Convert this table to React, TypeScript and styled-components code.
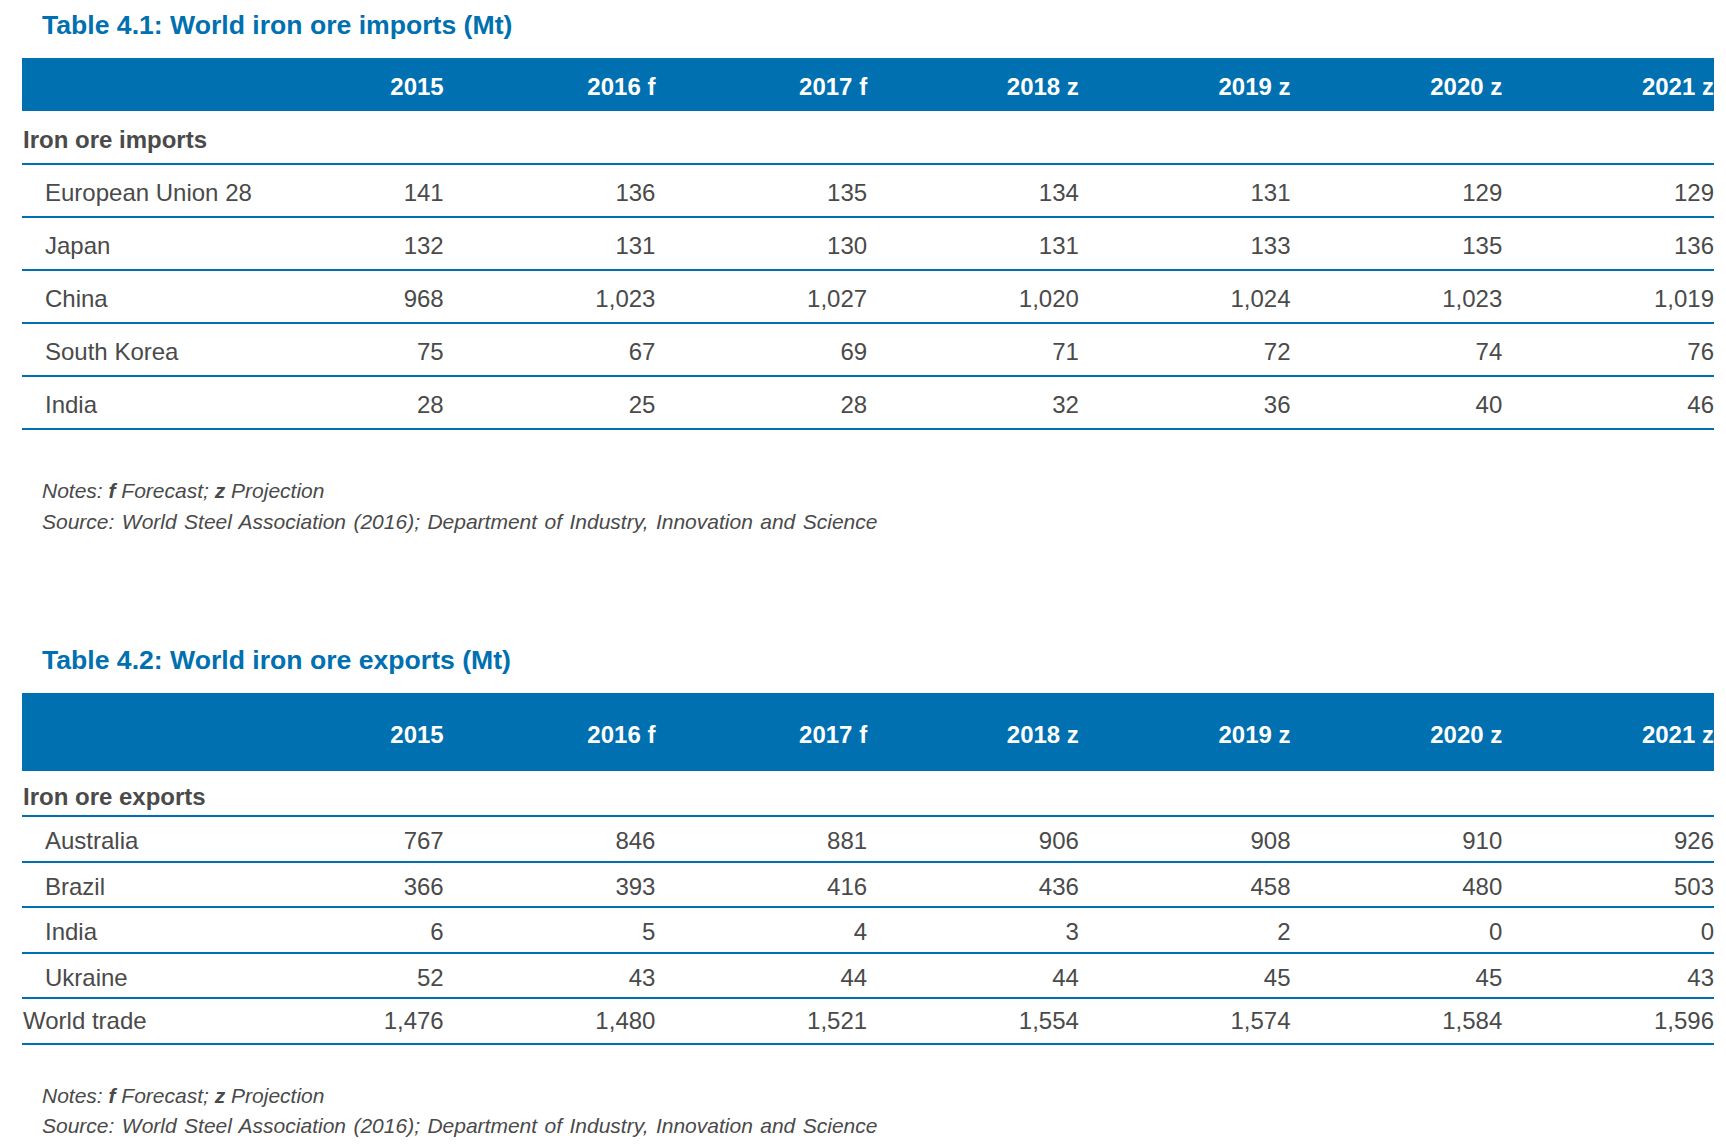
import React from 'react';
import styled, { createGlobalStyle } from 'styled-components';

const GlobalStyle = createGlobalStyle`
  html, body {
    margin: 0;
    padding: 0;
    background: #ffffff;
  }
  body {
    font-family: "Liberation Sans", Arial, Helvetica, sans-serif;
    color: #4b4b4b;
  }
`;

const BLUE = '#0070b0';
const TEXT = '#4a4a4a';

const Page = styled.div`
  padding: 8px 12px 0 22px;
  width: 1692px;
`;

const Section = styled.section<{ $gap?: number }>`
  margin-top: ${p => p.$gap ?? 0}px;
`;

const TableTitle = styled.h2`
  margin: 0 0 16px 20px;
  font-size: 26.6px;
  line-height: 34px;
  font-weight: 700;
  color: ${BLUE};
`;

const Row = styled.div`
  display: grid;
  grid-template-columns: 210px repeat(7, 1fr);
  align-items: center;
  box-sizing: border-box;
  font-size: 24px;
  line-height: 28px;
  white-space: nowrap;
`;

const HeaderRow = styled(Row)<{ $height: number; $pad: number }>`
  height: ${p => p.$height}px;
  padding-top: ${p => p.$pad}px;
  background: ${BLUE};
  color: #ffffff;
  font-weight: 700;
  overflow: hidden;
`;

const SectionRow = styled(Row)<{ $height: number; $pad: number }>`
  height: ${p => p.$height + 2}px;
  padding-top: ${p => p.$pad}px;
  border-bottom: 2px solid ${BLUE};
  color: ${TEXT};
  font-weight: 700;
`;

const DataRow = styled(Row)<{ $height: number; $pad: number }>`
  height: ${p => p.$height + 2}px;
  padding-top: ${p => p.$pad}px;
  border-bottom: 2px solid ${BLUE};
  color: ${TEXT};
`;

const Label = styled.div<{ $indent?: boolean }>`
  padding-left: ${p => (p.$indent ? 23 : 1)}px;
`;

const Num = styled.div`
  text-align: right;
`;

const Notes = styled.div<{ $gap: number }>`
  margin-top: ${p => p.$gap}px;
  margin-left: 20px;
  font-size: 21px;
  line-height: 30.5px;
  font-style: italic;
  color: ${TEXT};
`;

const NoteLine = styled.div<{ $spread?: boolean }>`
  word-spacing: ${p => (p.$spread ? 1.6 : 0)}px;
  white-space: nowrap;
`;

const years = ['2015', '2016 f', '2017 f', '2018 z', '2019 z', '2020 z', '2021 z'];

type Line = { name: string; values: string[]; total?: boolean };

const imports: Line[] = [
  { name: 'European Union 28', values: ['141', '136', '135', '134', '131', '129', '129'] },
  { name: 'Japan', values: ['132', '131', '130', '131', '133', '135', '136'] },
  { name: 'China', values: ['968', '1,023', '1,027', '1,020', '1,024', '1,023', '1,019'] },
  { name: 'South Korea', values: ['75', '67', '69', '71', '72', '74', '76'] },
  { name: 'India', values: ['28', '25', '28', '32', '36', '40', '46'] },
];

const exports: Line[] = [
  { name: 'Australia', values: ['767', '846', '881', '906', '908', '910', '926'] },
  { name: 'Brazil', values: ['366', '393', '416', '436', '458', '480', '503'] },
  { name: 'India', values: ['6', '5', '4', '3', '2', '0', '0'] },
  { name: 'Ukraine', values: ['52', '43', '44', '44', '45', '45', '43'] },
  { name: 'World trade', values: ['1,476', '1,480', '1,521', '1,554', '1,574', '1,584', '1,596'], total: true },
];

type Sizes = {
  header: [number, number];
  section: [number, number];
  row: [number, number];
  totalPad: number;
};

const DataTable: React.FC<{ title: string; section: string; lines: Line[]; sizes: Sizes }> = ({
  title,
  section,
  lines,
  sizes,
}) => (
  <>
    <TableTitle>{title}</TableTitle>
    <HeaderRow $height={sizes.header[0]} $pad={sizes.header[1]}>
      <div />
      {years.map(y => (
        <Num key={y}>{y}</Num>
      ))}
    </HeaderRow>
    <SectionRow $height={sizes.section[0]} $pad={sizes.section[1]}>
      <Label>{section}</Label>
    </SectionRow>
    {lines.map(line => (
      <DataRow
        key={line.name}
        $height={sizes.row[0]}
        $pad={line.total ? sizes.totalPad : sizes.row[1]}
      >
        <Label $indent={!line.total}>{line.name}</Label>
        {line.values.map((v, i) => (
          <Num key={i}>{v}</Num>
        ))}
      </DataRow>
    ))}
  </>
);

const NotesBlock: React.FC<{ gap: number }> = ({ gap }) => (
  <Notes $gap={gap}>
    <NoteLine>
      Notes: <b>f</b> Forecast; <b>z</b> Projection
    </NoteLine>
    <NoteLine $spread>
      Source: World Steel Association (2016); Department of Industry, Innovation and Science
    </NoteLine>
  </Notes>
);

export default function App() {
  return (
    <>
      <GlobalStyle />
      <Page>
        <Section>
          <DataTable
            title="Table 4.1: World iron ore imports (Mt)"
            section="Iron ore imports"
            lines={imports}
            sizes={{ header: [53, 4], section: [52, 5], row: [51, 4], totalPad: 4 }}
          />
          <NotesBlock gap={46} />
        </Section>
        <Section $gap={106}>
          <DataTable
            title="Table 4.2: World iron ore exports (Mt)"
            section="Iron ore exports"
            lines={exports}
            sizes={{ header: [78, 5], section: [44, 7], row: [43.6, 5], totalPad: 0 }}
          />
          <NotesBlock gap={36} />
        </Section>
      </Page>
    </>
  );
}
